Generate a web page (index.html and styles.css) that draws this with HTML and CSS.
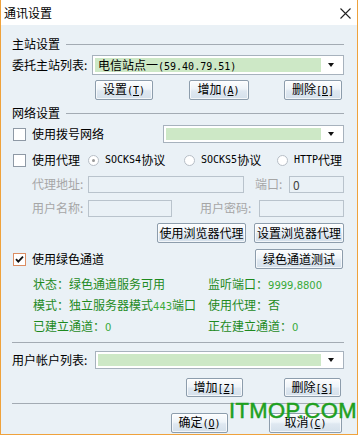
FILE: index.html
```html
<!DOCTYPE html>
<html lang="zh-CN">
<head>
  <meta charset="UTF-8">
  <title>通讯设置</title>
  <link rel="stylesheet" href="styles.css">
</head>
<body>
  <div class="window">
    <!-- title bar -->
    <div class="titlebar">
      <span class="title">通讯设置</span>
      <svg class="close" width="11" height="11" viewBox="0 0 11 11">
        <path d="M0.5 0.5 L10.5 10.5 M10.5 0.5 L0.5 10.5" stroke="#222" stroke-width="1.1" fill="none"/>
      </svg>
    </div>

    <div class="content">
      <!-- 主站设置 -->
      <div class="group"><span>主站设置</span><i class="rule"></i></div>
      <div class="row r-site">
        <span>委托主站列表:</span>
        <div class="combo w-site">
          <div class="combo-val">电信站点一<span class="lat">(59.40.79.51)</span></div>
          <div class="combo-btn"><i class="arrow"></i></div>
        </div>
      </div>
      <div class="row r-btns">
        <button class="btn w58">设置<span class="lat">(<u>T</u>)</span></button>
        <button class="btn w60">增加<span class="lat">(<u>A</u>)</span></button>
        <button class="btn w58">删除<span class="lat">[<u>D</u>]</span></button>
      </div>

      <!-- 网络设置 -->
      <div class="group g-net"><span>网络设置</span><i class="rule"></i></div>
      <div class="row r-dial">
        <span class="chk"></span><span class="chk-text">使用拨号网络</span>
        <div class="combo w-dial">
          <div class="combo-val"></div>
          <div class="combo-btn"><i class="arrow"></i></div>
        </div>
      </div>
      <div class="row r-proxy">
        <div class="chk-wrap"><span class="chk"></span><span class="chk-text">使用代理</span></div>
        <div class="opt o1"><span class="radio on"></span><span class="lat">SOCKS4</span>协议</div>
        <div class="opt o2"><span class="radio"></span><span class="lat">SOCKS5</span>协议</div>
        <div class="opt"><span class="radio"></span><span class="lat">HTTP</span>代理</div>
      </div>
      <div class="row r-field r-addr">
        <span class="dim lbl">代理地址:</span>
        <span class="field w156"></span>
        <span class="dim lbl-port">端口:</span>
        <span class="field grow">0</span>
      </div>
      <div class="row r-field">
        <span class="dim lbl">用户名称:</span>
        <span class="field w84"></span>
        <span class="dim lbl-pass">用户密码:</span>
        <span class="field grow"></span>
      </div>
      <div class="row r-browser">
        <button class="btn w89">使用浏览器代理</button>
        <button class="btn w90">设置浏览器代理</button>
      </div>

      <!-- 绿色通道 -->
      <div class="row r-green">
        <div class="chk-wrap">
          <span class="chk checked">
            <svg width="11" height="11" viewBox="0 0 11 11"><path d="M2 5.2 L4.3 7.6 L9 2.6" stroke="#111" stroke-width="1.8" fill="none"/></svg>
          </span>
          <span class="chk-text">使用绿色通道</span>
        </div>
        <button class="btn w88">绿色通道测试</button>
      </div>
      <div class="status">
        <span>状态：绿色通道服务可用</span>
        <span>监听端口：<span class="num">9999,8800</span></span>
        <span>模式：独立服务器模式<span class="num">443</span>端口</span>
        <span>使用代理：否</span>
        <span>已建立通道：<span class="num">0</span></span>
        <span>正在建立通道：<span class="num">0</span></span>
      </div>
      <div class="sep"></div>

      <!-- 用户帐户 -->
      <div class="row r-account">
        <span>用户帐户列表:</span>
        <div class="combo w-account">
          <div class="combo-val"></div>
          <div class="combo-btn"><i class="arrow"></i></div>
        </div>
      </div>
      <div class="row r-acc-btns">
        <button class="btn w57">增加<span class="lat">[<u>Z</u>]</span></button>
        <button class="btn w57">删除<span class="lat">[<u>S</u>]</span></button>
      </div>
      <div class="sep sep2"></div>
      <div class="row r-ok">
        <button class="btn w57">确定<span class="lat">(<u>O</u>)</span></button>
        <button class="btn w73">取消<span class="lat">(<u>C</u>)</span></button>
      </div>
    </div>

    <div class="watermark">ITMOP.COM</div>
  </div>
</body>
</html>
```

FILE: styles.css
```css
body {
  margin: 0;
  padding: 0;
  background: #fff;
}
.window {
  position: relative;
  width: 358px;
  height: 435px;
  box-sizing: border-box;
  border: 1px solid #efa23c;
  border-top: none;
  background: #eaf1f6;
  font: 12px/14px "Noto Sans CJK SC", sans-serif;
  color: #000;
  overflow: hidden;
}
.titlebar {
  height: 25px;
  background: #fff;
  display: flex;
  align-items: center;
  justify-content: space-between;
  padding: 0 6px 0 3px;
}
.close {
  display: block;
  margin-top: 2px;
}
.content {
  padding: 0 13px 0 11px;
}
.lat {
  font-family: "DejaVu Sans Mono", monospace;
  font-size: 10px;
}
.group {
  display: flex;
  align-items: center;
  height: 14px;
  margin-top: 12px;
}
.g-net {
  margin-top: 6px;
}
.rule {
  flex: 1;
  height: 1px;
  background: #a3abb3;
  margin-left: 6px;
}
.row {
  display: flex;
  align-items: center;
}

/* combo boxes */
.combo {
  display: flex;
  box-sizing: border-box;
  height: 20px;
  margin-left: auto;
  padding: 2px;
  border: 1px solid #a7b2bd;
  background: #fff;
}
.combo-val {
  flex: 1;
  background: #cde8c6;
  padding-left: 3px;
  line-height: 14px;
  white-space: nowrap;
}
.combo-btn {
  width: 20px;
  display: flex;
  align-items: center;
  justify-content: center;
}
.arrow {
  width: 0;
  height: 0;
  border-left: 3px solid transparent;
  border-right: 3px solid transparent;
  border-top: 4px solid #111;
}
.w-site { width: 252px; }
.w-dial { width: 181px; height: 18px; }
.w-account { width: 249px; height: 18px; }

/* buttons */
.btn {
  box-sizing: border-box;
  height: 20px;
  padding: 0;
  border: 1px solid #8d9dac;
  border-radius: 2px;
  background: linear-gradient(#fcfdfe, #eef4f9 45%, #dfe8f1 55%, #d4e0eb);
  box-shadow: inset 0 0 0 1px rgba(255, 255, 255, 0.7);
  font: 12px/16px "Noto Sans CJK SC", sans-serif;
  color: #000;
  white-space: nowrap;
}
.w57 { width: 57px; }
.w58 { width: 58px; }
.w60 { width: 60px; }
.w73 { width: 73px; }
.w88 { width: 88px; }
.w89 { width: 89px; }
.w90 { width: 90px; }

.r-site { margin-top: 4px; height: 20px; }
.r-btns {
  margin-top: 5px;
  height: 20px;
  padding: 0 2px 0 83px;
  justify-content: space-between;
}

/* checkboxes and radios */
.chk {
  box-sizing: border-box;
  width: 13px;
  height: 13px;
  margin-left: 1px;
  border: 1px solid #8e99a5;
  background: #fff;
  display: flex;
  align-items: center;
  justify-content: center;
}
.chk.checked {
  border-color: #dc8d62;
}
.chk-text {
  margin-left: 6px;
}
.chk-wrap {
  display: flex;
  align-items: center;
}
.radio {
  box-sizing: border-box;
  width: 11px;
  height: 11px;
  border: 1px solid #b7bec6;
  border-radius: 50%;
  background: #fff;
  margin-right: 6px;
  display: flex;
  align-items: center;
  justify-content: center;
}
.radio.on::after {
  content: "";
  width: 3px;
  height: 3px;
  border-radius: 50%;
  background: #999;
}
.opt {
  display: flex;
  align-items: center;
}
.o1 { width: 96px; }
.o2 { width: 93px; }

.r-dial { margin-top: 5px; height: 18px; }
.r-proxy { margin-top: 10px; height: 14px; }
.r-proxy .chk-wrap { width: 76px; }

/* disabled proxy fields */
.dim { color: #a6a6a6; }
.r-field {
  margin-top: 6px;
  height: 18px;
  padding-left: 20px;
}
.r-addr { margin-top: 8px; }
.lbl { width: 56px; }
.lbl-port { width: 34px; margin-left: 11px; }
.lbl-pass { width: 59px; margin-left: 28px; }
.field {
  box-sizing: border-box;
  height: 17px;
  border: 1px solid #b9c3cc;
  padding-left: 3px;
  line-height: 15px;
  color: #444;
}
.w156 { width: 156px; }
.w84 { width: 84px; }
.grow { flex: 1; }

.r-browser {
  margin-top: 6px;
  height: 20px;
  justify-content: flex-end;
  gap: 8px;
}
.r-green {
  margin-top: 6px;
  height: 20px;
  justify-content: space-between;
}
.r-green .btn { margin-right: 1px; }

/* status block */
.status {
  display: grid;
  grid-template-columns: 175px 1fr;
  margin-top: 5px;
  padding-left: 21px;
  line-height: 19px;
  color: #1e8a1e;
  white-space: nowrap;
}
.num {
  font-family: "DejaVu Sans", sans-serif;
  font-size: 10px;
  color: #38aa38;
}
.sep {
  margin-top: 5px;
  border-top: 1px solid #a3abb3;
}
.sep2 { margin-top: 6px; }

.r-account { margin-top: 8px; height: 18px; }
.r-acc-btns {
  margin-top: 9px;
  height: 19px;
  justify-content: flex-end;
  gap: 41px;
  padding-right: 3px;
}
.r-acc-btns .btn { height: 19px; line-height: 15px; }
.r-ok {
  margin-top: 9px;
  height: 20px;
  justify-content: flex-end;
  gap: 41px;
  padding-right: 2px;
}

.watermark {
  position: absolute;
  left: 228px;
  top: 398px;
  font: 22px/26px "Liberation Sans", sans-serif;
  color: #1ea01e;
  -webkit-text-stroke: 0.5px #1ea01e;
  letter-spacing: 0.4px;
}
```
